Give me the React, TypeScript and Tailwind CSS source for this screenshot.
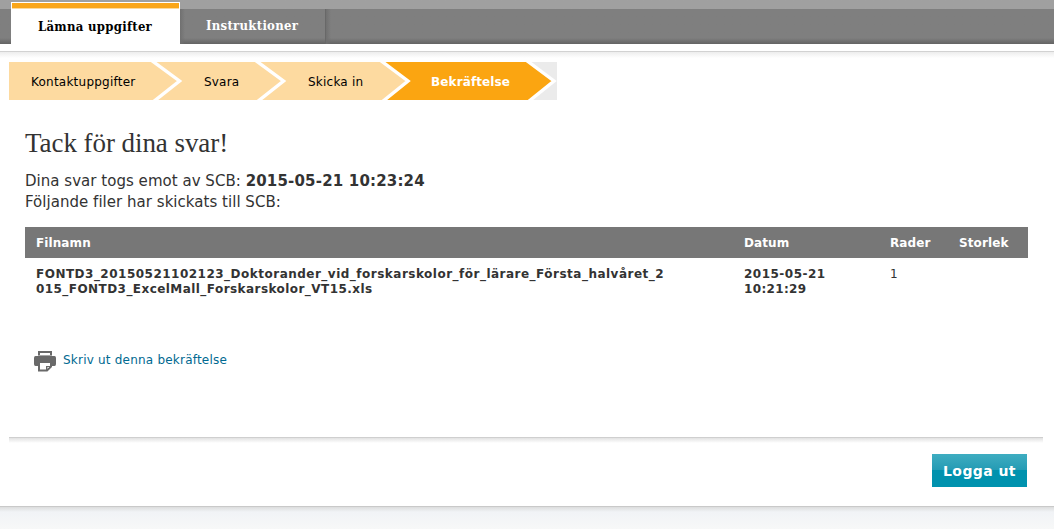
import clsx from "clsx";

const steps = [
  { title: "Kontaktuppgifter", className: "w-[151px] pl-[22px] tracking-[0.23px]" },
  { title: "Svara", className: "w-[104px] pl-[44px] tracking-[0.2px]" },
  { title: "Skicka in", className: "w-[124px] pl-[44px] tracking-[0.22px]" },
  { title: "Bekräftelse", className: "w-[169px] pl-[43px] font-bold text-white tracking-[0.12px]" },
];

const files = [
  {
    name: [
      "FONTD3_20150521102123_Doktorander_vid_forskarskolor_för_lärare_Första_halvåret_2",
      "015_FONTD3_ExcelMall_Forskarskolor_VT15.xls",
    ],
    date: ["2015-05-21", "10:21:29"],
    rows: 1,
    size: "",
  },
];

const columns = "grid grid-cols-[708px_146px_69px_1fr] pl-[11px]";

const Tabs = () => (
  <header className="h-[44px] bg-linear-to-b from-[#a0a0a0] from-[9px] via-[#7f7f7f] via-[9px] to-[#7f7f7f]">
    <nav className="flex h-full items-end bg-linear-to-b from-transparent from-[38px] to-[#646464] pl-[11px] font-['DejaVu_Serif_Condensed','DejaVu_Serif',serif] text-[13px] font-bold tracking-[0.28px]">
      <a className="flex h-[42px] w-[169px] flex-col bg-white p-px pb-0 text-black">
        <span className="h-[6px] border-b border-[#fcd99d] bg-[#faa61a]" />
        <span className="pl-[26px] pt-[8px] leading-[20px]">Lämna uppgifter</span>
      </a>
      <a className="flex h-[35px] w-[146px] border-r border-[#686868] bg-linear-to-r from-[#707070] to-transparent to-[5px] pl-[26px] pt-[7px] leading-[20px] text-white">
        Instruktioner
      </a>
      <span className="h-[35px] w-[5px] bg-linear-to-r from-[#707070] to-transparent" />
    </nav>
  </header>
);

const Steps = () => (
  <div className="relative ml-[9px] h-[38px] w-[548px]">
    <svg className="absolute inset-0" width="548" height="38" viewBox="0 0 548 38">
      <rect width="548" height="38" fill="#ebebeb" />
      <path d="M0 0H380L404 19L380 38H0Z" fill="#fddaa0" />
      <path d="M375 0H521L545 19L521 38H377L399 19Z" fill="#fba511" />
      <g fill="none" stroke="#fff" strokeWidth="3.4">
        <path d="M142 -2L170.500 19L144 40" />
        <path d="M246 -2L274.500 19L248 40" />
        <path d="M371 -2L399 19L373 40" />
        <path d="M517 -2L545 19L519 40" />
      </g>
    </svg>
    <ol className="relative flex h-full items-center pt-px text-xs text-black">
      {steps.map((step) => (
        <li key={step.title} className={clsx("whitespace-nowrap", step.className)}>
          {step.title}
        </li>
      ))}
    </ol>
  </div>
);

const PrinterIcon = () => (
  <svg width="24" height="22" viewBox="0 0 24 22">
    <path d="M6 6V2H18V6" fill="#fff" stroke="#696969" strokeWidth="2" />
    <path d="M2.500 6H21.500Q23 6 23 8V14Q23 16 21.500 16H2.500Q1 16 1 14V8Q1 6 2.500 6Z" fill="#696969" />
    <path d="M5 5.500H19" stroke="#a5a5a5" />
    <path d="M6 12H18V16.500L14 20.500H6Z" fill="#fff" stroke="#696969" strokeWidth="2" />
    <path d="M13 21V16H18.500Z" fill="#696969" />
    <path d="M14.500 18.500V17.500H16" fill="none" stroke="#ddd" />
  </svg>
);

const App = () => {
  return (
    <div className="h-[529px] overflow-hidden bg-white font-['DejaVu_Sans',Verdana,sans-serif] text-[#333]">
      <Tabs />
      <div className="mt-[7px] h-[7px] border-t border-[#d2d2d2] bg-linear-to-b from-[#ededed] to-white" />
      <div className="pt-[4px]">
        <Steps />
      </div>

      <main className="ml-[25px] w-[1003px]">
        <h1 className="mt-[27px] font-['Liberation_Serif',serif] text-[27px] leading-[32px] tracking-[-0.06px]">
          Tack för dina svar!
        </h1>
        <div className="mt-[12px] text-[15px] leading-[21px] tracking-[0.03px]">
          <p>
            Dina svar togs emot av SCB: <b className="tracking-[0.18px]">2015-05-21 10:23:24</b>
          </p>
          <p>Följande filer har skickats till SCB:</p>
        </div>

        <div className="mt-[14px] text-xs">
          <div className={clsx(columns, "h-[31px] items-center bg-[#777] font-bold tracking-[0.1px] text-white")}>
            <span>Filnamn</span>
            <span>Datum</span>
            <span>Rader</span>
            <span>Storlek</span>
          </div>
          {files.map((file) => (
            <div key={file.name[0]} className={clsx(columns, "pt-[9px] leading-[15px]")}>
              <div className="font-bold tracking-[0.49px]">
                {file.name.map((line) => (
                  <p key={line} className="whitespace-nowrap last:tracking-[0.44px]">{line}</p>
                ))}
              </div>
              <div className="font-bold tracking-[0.49px]">
                {file.date.map((line) => (
                  <p key={line} className="last:tracking-[0.35px]">{line}</p>
                ))}
              </div>
              <span>{file.rows}</span>
              <span>{file.size}</span>
            </div>
          ))}
        </div>

        <a className="mt-[53px] flex h-[22px] items-start gap-[6px] pl-[8px] text-xs tracking-[0.21px] text-[#006991]">
          <PrinterIcon />
          <span className="pt-[2px]">Skriv ut denna bekräftelse</span>
        </a>
      </main>

      <footer>
        <div className="ml-[9px] mt-[65px] h-[6px] w-[1034px] border-t border-[#cfcfcf] bg-linear-to-b from-[#e2e2e2] to-white" />
        <div className="flex h-[63px] justify-end pr-[27px] pt-[11px]">
          <button className="h-[33px] w-[95px] bg-linear-to-b from-[#3eadc1] via-[#249bb4] via-[16px] to-[#0092ae] to-[16px] text-sm font-bold tracking-[0.43px] text-white">
            Logga ut
          </button>
        </div>
        <div className="h-[23px] border-t border-[#c9c9c9] bg-linear-to-b from-[#dcdddd] via-[#f1f3f6] via-[5px] to-[#f7f8f8]" />
      </footer>
    </div>
  );
};

export default App;
